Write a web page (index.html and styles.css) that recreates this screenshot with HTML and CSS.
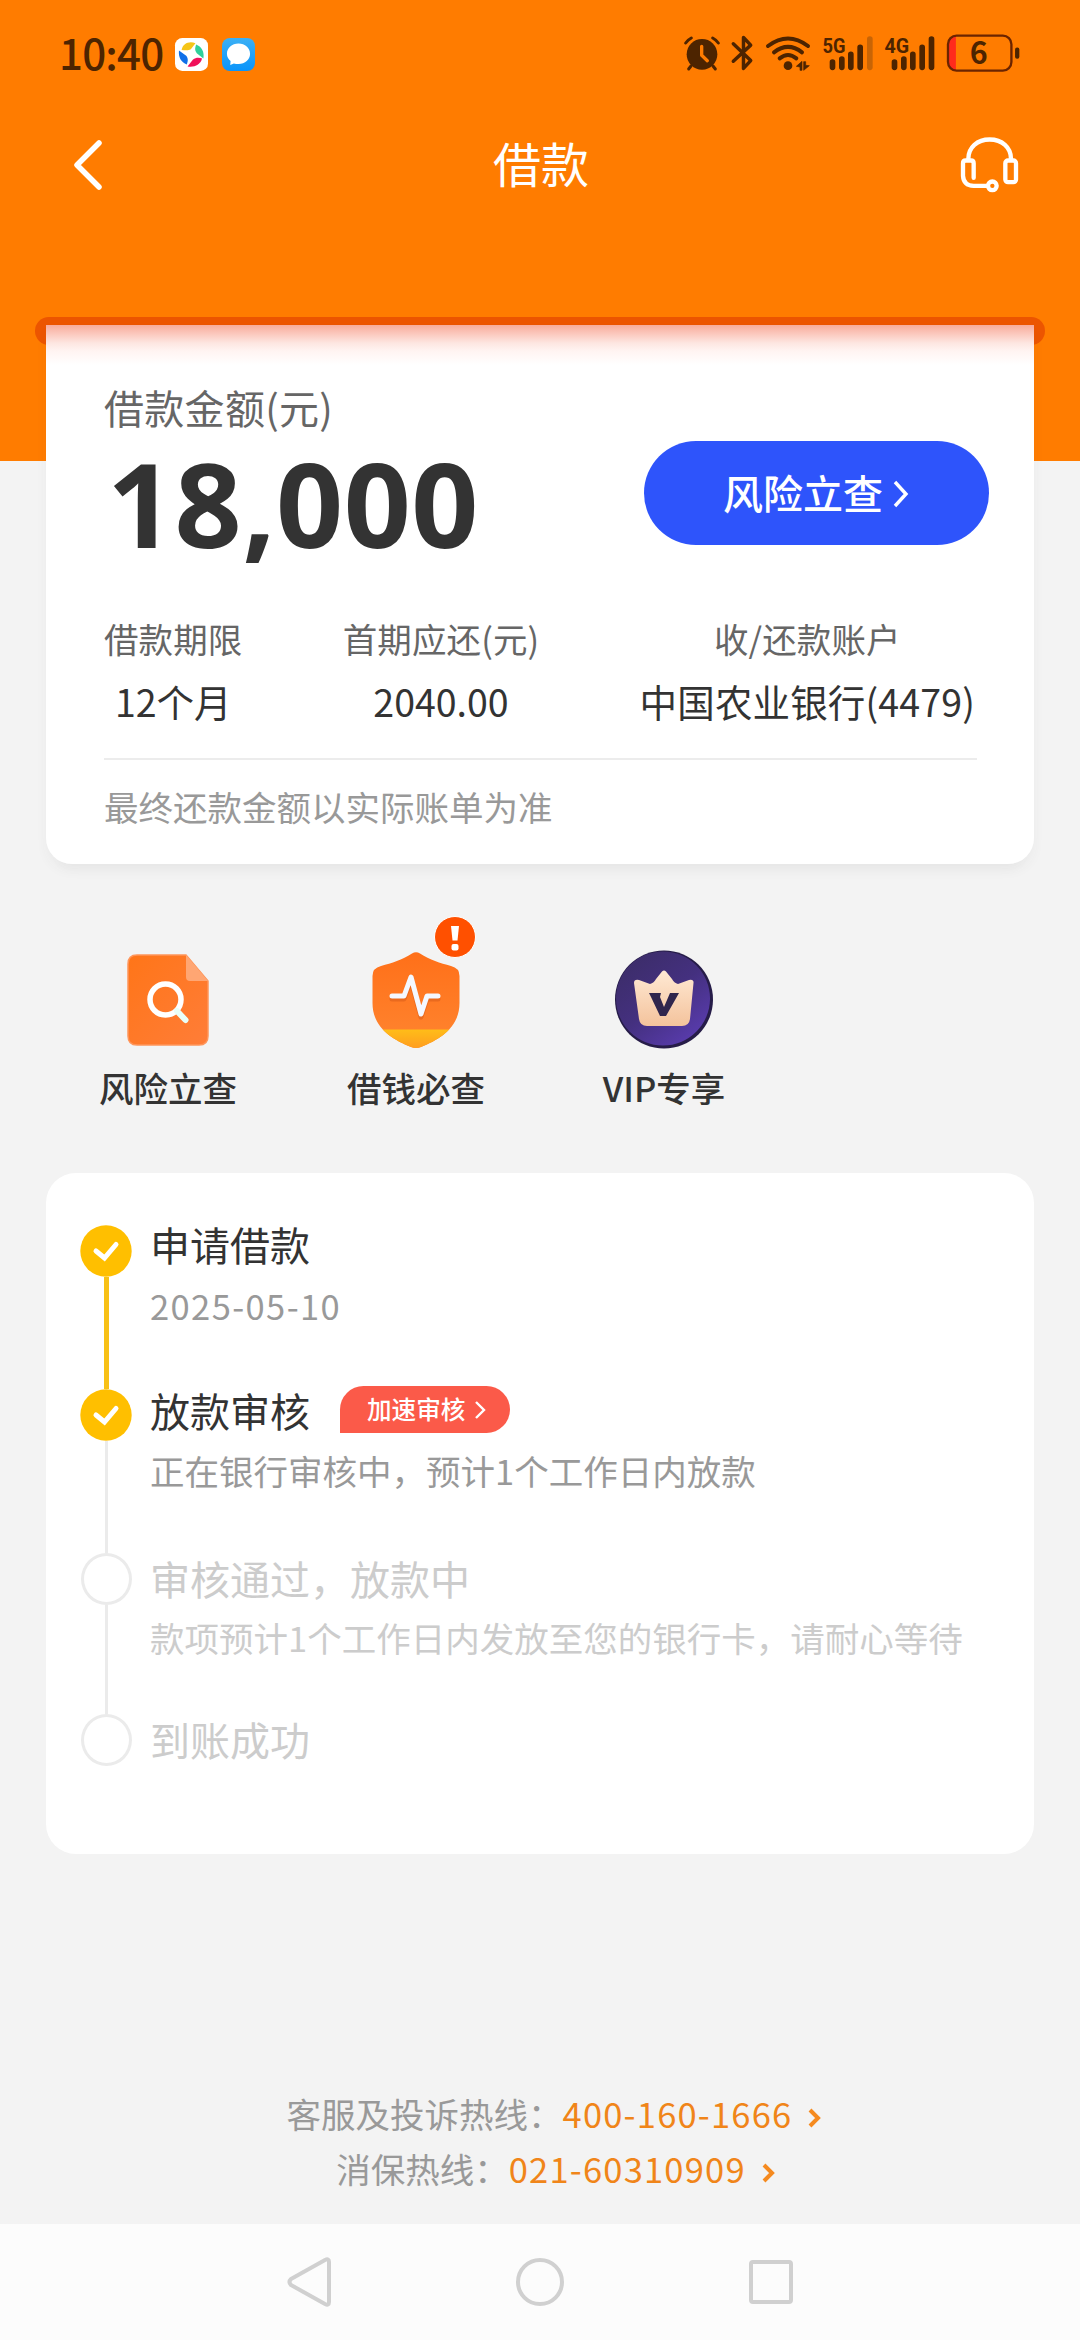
FILE: index.html
```html
<!DOCTYPE html>
<html lang="zh-CN">
<head>
<meta charset="UTF-8">
<title>借款</title>
<link rel="stylesheet" href="styles.css">
</head>
<body>
<div class="page">
  <header class="hero">
    <div class="status">
      <div class="status-left">
        <span class="clock">10:40</span>
        <svg class="app-icon" viewBox="0 0 100 100"><rect width="100" height="100" rx="22" fill="#fff"/>
          <path d="M20 36C24 16 44 8 62 16L48 34C38 40 28 36 20 36Z" fill="#f5c518"/>
          <path d="M64 20C80 26 90 42 86 62L66 46C58 36 62 28 64 20Z" fill="#2fd09a"/>
          <path d="M82 62C78 80 58 90 38 86L54 66C64 58 74 60 82 62Z" fill="#f0105a"/>
          <path d="M36 80C18 74 10 58 12 38L34 54C42 64 38 74 36 80Z" fill="#0f6fe8"/></svg>
        <svg class="app-icon app-msg" viewBox="0 0 100 100"><defs><linearGradient id="msg" x1="0" y1="0" x2="0" y2="1"><stop offset="0" stop-color="#3bb0f5"/><stop offset="1" stop-color="#0a94fa"/></linearGradient></defs><rect width="100" height="100" rx="24" fill="url(#msg)"/><path d="M50 17c20 0 35 13 35 31S70 79 50 79c-5 0-10-1-14-2l-11 5 1-12C19 65 15 57 15 48c0-18 15-31 35-31Z" fill="#fff"/></svg>
      </div>
      <div class="status-right">
        <svg class="ic-alarm" viewBox="69 48 108 105"><circle cx="123" cy="103" r="46" fill="#4d2400"/><g stroke="#4d2400" stroke-width="9" stroke-linecap="round" fill="none"><path d="M74 69Q81 59 91 54M155 54Q165 59 172 69"/><path d="M90 138L83 147M156 138L163 147"/></g><path d="M122 79V106L139 122" stroke="#ff7c00" stroke-width="10" stroke-linecap="round" stroke-linejoin="round" fill="none"/></svg>
        <svg class="ic-bt" viewBox="210 46 70 108"><path d="M217 72L270 123L248 147V53L270 76L217 125" fill="none" stroke="#4d2400" stroke-width="10.500" stroke-linejoin="round" stroke-linecap="round"/></svg>
        <svg class="ic-wifi" viewBox="312 46 138 108"><g fill="none" stroke="#4d2400" stroke-width="12" stroke-linecap="round"><path d="M321 79Q381 34 441 79"/><path d="M339 98Q381 65 423 98"/><path d="M356 116Q381 96 406 116"/></g><circle cx="381" cy="138" r="13" fill="#4d2400"/><path d="M406 140L423 125V152H417V142ZM445 138L428 152V126H434V137Z" fill="#4d2400" stroke="#4d2400" stroke-width="2"/></svg>
        <svg class="ic-sig" viewBox="482 46 152 108"><text x="483" y="99" font-size="63" textLength="69" lengthAdjust="spacingAndGlyphs" class="net">5G</text><g stroke="#4d2400" stroke-width="17" stroke-linecap="round"><path d="M513 127V143M541 118V143M568 104V143M596 83V143"/><path d="M625 58V143" stroke="#c86405"/></g></svg>
        <svg class="ic-sig sig2" viewBox="668 46 152 108"><text x="669" y="99" font-size="63" textLength="74" lengthAdjust="spacingAndGlyphs" class="net">4G</text><g stroke="#4d2400" stroke-width="17" stroke-linecap="round"><path d="M699 127V143M727 118V143M754 104V143M782 83V143M810 58V143"/></g></svg>
        <svg class="ic-bat" viewBox="853 42 222 115"><path d="M882 49V152Q859 150 859 124V75Q859 51 882 49Z" fill="#ff2b1c"/><rect x="858" y="47" width="192" height="106" rx="26" fill="none" stroke="#6b2400" stroke-width="7"/><rect x="1061" y="83" width="13" height="34" rx="6" fill="#4d2400"/><text x="951" y="134" font-size="92" text-anchor="middle" class="bat">6</text></svg>
      </div>
    </div>
    <nav class="topbar">
      <svg class="back" viewBox="0 0 30 52"><path d="M26 4L4 26L26 48" fill="none" stroke="#fff" stroke-width="5.5" stroke-linecap="round" stroke-linejoin="round"/></svg>
      <h1 class="title">借款</h1>
      <svg class="headset" viewBox="896 348 177 170"><g fill="none" stroke="#fff" stroke-width="13" stroke-linejoin="round" stroke-linecap="round"><path d="M921 416C921 381 948 358 985 358S1049 381 1049 416"/><rect x="1032" y="421" width="32" height="65" rx="8"/><path d="M937 473V429Q937 421 929 421H913Q905 421 905 429V467Q907 496 937 497H976"/><circle cx="993" cy="497" r="13"/></g></svg>
    </nav>
  </header>

  <div class="slot"></div>
  <section class="card loan">
    <div class="loan-head">
      <div>
        <p class="label-lg">借款金额(元)</p>
        <p class="amount">18,000</p>
      </div>
      <a class="cta">风险立查<svg class="cta-arrow" viewBox="0 0 17 28"><path d="M3 2L14 14L3 26" fill="none" stroke="#fff" stroke-width="3.4"/></svg></a>
    </div>
    <div class="facts">
      <div class="fact"><p class="fact-k">借款期限</p><p class="fact-v">12个月</p></div>
      <div class="fact"><p class="fact-k">首期应还(元)</p><p class="fact-v">2040.00</p></div>
      <div class="fact fact-bank"><p class="fact-k">收/还款账户</p><p class="fact-v">中国农业银行(4479)</p></div>
    </div>
    <p class="note">最终还款金额以实际账单为准</p>
  </section>

  <section class="tools">
    <div class="tool">
      <svg class="tool-icon" viewBox="0 0 100 100"><defs><linearGradient id="doc" x1="0" y1="0" x2="1" y2="1"><stop offset="0" stop-color="#ff7518"/><stop offset="1" stop-color="#ff7d38"/></linearGradient></defs>
        <path d="M19 6H68L90 32V87Q90 96 81 96H19Q10 96 10 87V15Q10 6 19 6Z" fill="url(#doc)" stroke="#ff955a" stroke-width="1.5"/><path d="M68 6L90 32H72Q68 32 68 28Z" fill="#ffa673"/>
        <circle cx="47.500" cy="50.500" r="15.500" fill="none" stroke="#fff" stroke-width="5.500"/><path d="M59 62L67.500 71" stroke="#e9fff8" stroke-width="6" stroke-linecap="round"/></svg>
      <span>风险立查</span>
    </div>
    <div class="tool">
      <svg class="tool-icon" viewBox="0 0 100 100"><defs><linearGradient id="shd" x1="0" y1="0" x2="0" y2="1"><stop offset="0" stop-color="#ff6f18"/><stop offset="1" stop-color="#ff8530"/></linearGradient><linearGradient id="yel" x1="0" y1="0" x2="0" y2="1"><stop offset="0" stop-color="#ffbd18"/><stop offset="1" stop-color="#ff9b20"/></linearGradient><clipPath id="sc"><path d="M46 4.500Q50 2 54 4.500C64 11 74 14 85 17Q93.500 19 93.500 27V54C93.500 78 75 90 55 98Q50 100 45 98C25 90 6.500 78 6.500 54V27Q6.500 19 15 17C26 14 36 11 46 4.500Z"/></clipPath></defs>
        <g clip-path="url(#sc)"><rect width="100" height="100" fill="url(#shd)"/><rect y="80.500" width="100" height="20" fill="url(#yel)"/></g>
        <path d="M26 48H38L45 29L55 66L61 48H72" transform="translate(0 2)" fill="none" stroke="#d65a18" stroke-opacity=".5" stroke-width="5" stroke-linecap="round" stroke-linejoin="round"/>
        <path d="M26 47H38L45 28L55 65L61 47H72" fill="none" stroke="#f4f8ff" stroke-width="5" stroke-linecap="round" stroke-linejoin="round"/></svg>
      <svg class="alert" viewBox="0 0 44 44"><circle cx="22" cy="22" r="20.500" fill="#ff5000" stroke="#fff" stroke-width="1"/><path d="M18 11H26L24.500 25.500H19.500Z" fill="#fff"/><rect x="18.500" y="29" width="7" height="6.500" rx="2" fill="#fff"/></svg>
      <span>借钱必查</span>
    </div>
    <div class="tool">
      <svg class="tool-icon" viewBox="0 0 100 100"><defs><linearGradient id="vip" x1="0" y1="0" x2=".8" y2="1"><stop offset="0" stop-color="#3a2c64"/><stop offset=".55" stop-color="#44307f"/><stop offset="1" stop-color="#5a3cb0"/></linearGradient><linearGradient id="crown" x1="0" y1="0" x2="0" y2="1"><stop offset="0" stop-color="#ffe9d4"/><stop offset="1" stop-color="#f4c39c"/></linearGradient></defs>
        <circle cx="50" cy="50.500" r="49" fill="#261c48"/><circle cx="49" cy="49.500" r="47" fill="url(#vip)"/>
        <path d="M20 34Q20 30 25 31L36 35Q40 34 42 30L48 22.500Q50 20.500 52 22.500L58 30Q60 34 64 35L75 31Q80 30 79.500 34L76 70Q75 77 68 77H33Q26 77 25 70Z" fill="url(#crown)"/>
        <path d="M35 44H47L46 48L50 58L56 44H65L52 67H46L37 48Z" fill="#30264d"/></svg>
      <span>VIP专享</span>
    </div>
  </section>

  <section class="card steps">
    <div class="step">
      <div class="rail"><svg class="dot" viewBox="0 0 52 52"><circle cx="26" cy="26" r="25.700" fill="#ffbf00"/><path d="M16 26L24.500 33L36 19.500" fill="none" stroke="#fff" stroke-width="5" stroke-linecap="round"/></svg><i class="line line-on"></i></div>
      <div class="body"><h2>申请借款</h2><p class="date">2025-05-10</p></div>
    </div>
    <div class="step">
      <div class="rail"><svg class="dot" viewBox="0 0 52 52"><circle cx="26" cy="26" r="25.700" fill="#ffbf00"/><path d="M16 26L24.500 33L36 19.500" fill="none" stroke="#fff" stroke-width="5" stroke-linecap="round"/></svg><i class="line"></i></div>
      <div class="body"><div class="step-title"><h2>放款审核</h2><span class="tag">加速审核<svg class="tag-arrow" viewBox="0 0 12 20"><path d="M2 2L10 10L2 18" fill="none" stroke="#fff" stroke-width="2.400"/></svg></span></div><p>正在银行审核中，预计1个工作日内放款</p></div>
    </div>
    <div class="step todo">
      <div class="rail"><i class="dot ring"></i><i class="line"></i></div>
      <div class="body"><h2>审核通过，放款中</h2><p>款项预计1个工作日内发放至您的银行卡，请耐心等待</p></div>
    </div>
    <div class="step todo">
      <div class="rail"><i class="dot ring"></i></div>
      <div class="body"><h2>到账成功</h2></div>
    </div>
  </section>

  <footer class="contact">
    <p>客服及投诉热线：<a>400-160-1666</a><svg class="link-arrow" viewBox="0 0 14 20"><path d="M3 2L11 10L3 18" fill="none" stroke="#f58a1f" stroke-width="4"/></svg></p>
    <p class="second">消保热线：<a>021-60310909</a><svg class="link-arrow" viewBox="0 0 14 20"><path d="M3 2L11 10L3 18" fill="none" stroke="#f58a1f" stroke-width="4"/></svg></p>
  </footer>

  <div class="navbar">
    <svg viewBox="0 0 52 52"><path d="M42 4Q46 2 46 6V46Q46 50 42 48L8 29Q5 26 8 23Z" fill="none" stroke="#d0d0d0" stroke-width="4" stroke-linejoin="round"/></svg>
    <svg viewBox="0 0 52 52"><circle cx="26" cy="26" r="22" fill="none" stroke="#d0d0d0" stroke-width="4"/></svg>
    <svg viewBox="0 0 52 52"><rect x="6" y="6" width="40" height="40" rx="2" fill="none" stroke="#d0d0d0" stroke-width="4"/></svg>
  </div>
</div>
</body>
</html>
```

FILE: styles.css
```css
* { box-sizing: border-box; margin: 0; padding: 0; }
body { background: #f3f3f3; font-family: "Noto Sans CJK SC", "Noto Sans", sans-serif; color: #333; }
svg { display: block; flex: none; overflow: visible; }
i { display: block; }
.page { width: 1080px; height: 2340px; display: flex; flex-direction: column; overflow: hidden; }

.hero { height: 461px; background: #ff7c00; flex: none; }
.status { height: 108px; padding: 0 60px 0 59px; display: flex; align-items: center; justify-content: space-between; }
.status-left, .status-right { display: flex; align-items: center; }
.clock { font-size: 42px; line-height: 50px; width: 116px; color: #4d2400; font-weight: 500; white-space: nowrap; letter-spacing: -.8px; padding-bottom: 4px; }
.app-icon { width: 33px; height: 33px; }
.app-msg { margin-left: 14px; }
.ic-alarm { width: 36px; height: 35px; }
.ic-bt { width: 23px; height: 36px; margin-left: 11px; }
.ic-wifi { width: 46px; height: 36px; margin-left: 11px; }
.ic-sig { width: 51px; height: 36px; margin-left: 11px; }
.ic-bat { width: 74px; height: 38px; margin-left: 11px; }
.status-right > svg { position: static; margin-bottom: 2px; }
.net { font-family: Roboto, sans-serif; font-weight: 700; fill: #4d2400; }
.bat { font-family: "Noto Sans CJK SC", sans-serif; font-weight: 700; fill: #4d2400; }

.topbar { height: 113px; padding: 0 61px 0 73px; display: flex; align-items: center; justify-content: space-between; }
.back { width: 30px; height: 52px; }
.title { font-size: 48px; line-height: 60px; font-weight: 400; color: #fff; padding: 0 0 6px 19px; }
.headset { width: 59px; height: 57px; }

.slot { flex: none; height: 28px; margin: -144px 35px 0; border-radius: 14px; background: #ec5500; }
.card { background: #fff; margin: 0 46px; flex: none; position: relative; }
.loan { margin-top: -20px; height: 539px; padding: 57px 58px 0; border-radius: 0 0 26px 26px;
  background: linear-gradient(180deg, #f8ab9b 0, #fbc9be 9px, #fde6e1 18px, #fff4f2 26px, #fff 40px);
  box-shadow: 0 7px 12px rgba(60, 60, 60, .045), 0 16px 10px -10px rgba(0,0,0,.02); }
.loan-head { display: flex; justify-content: space-between; height: 226px; }
.label-lg { font-size: 40px; line-height: 50px; color: #666; white-space: nowrap; letter-spacing: .3px; }
.amount { font-family: "Noto Sans", sans-serif; font-weight: 700; font-size: 117.5px; line-height: 130px; letter-spacing: .4px; margin: 5px 0 0 3px; color: #333; }
.cta { width: 345px; height: 104px; margin: 59px -13px 0 0; border-radius: 52px; background: #2e54fb; color: #fff; font-size: 40px; font-weight: 500; line-height: 100px; padding: 0 0 3px 79px; display: flex; align-items: center; white-space: nowrap; }
.cta-arrow { width: 17px; height: 28px; margin: 4px 0 0 9px; }
.facts { display: flex; justify-content: space-between; height: 152px; padding-top: 6px; border-bottom: 2px solid #ececec; text-align: center; white-space: nowrap; margin-right: -1px; }
.fact-k { font-size: 34.5px; line-height: 48px; color: #666; letter-spacing: .1px; }
.fact-v { font-size: 37.5px; line-height: 48px; margin-top: 15px; color: #333; }
.fact-bank { margin-right: 2px; }
.fact-bank .fact-v { letter-spacing: .15px; }
.note { font-size: 34.5px; line-height: 48px; color: #999; margin-top: 22px; }

.tools { flex: none; height: 309px; padding: 85px 44px 0; display: flex; }
.tool { width: 248px; position: relative; display: flex; flex-direction: column; align-items: center; font-size: 34.5px; line-height: 48px; font-weight: 500; }
.tool-icon { width: 100px; height: 100px; margin-bottom: 14px; }
.alert { position: absolute; left: 141px; top: -34px; width: 44px; height: 44px; }

.steps { height: 681px; padding: 52px 35px 0 34px; border-radius: 30px; }
.step { display: flex; height: 164px; }
.step:nth-child(3) { height: 161px; }
.rail { width: 52px; display: flex; flex-direction: column; align-items: center; flex: none; }
.dot { width: 52px; height: 52px; flex: none; }
.ring { border: 3px solid #ebebeb; border-radius: 50%; width: 51px; height: 52px; }
.line { width: 3px; flex: 1; background: #ebebeb; }
.line-on { width: 5px; background: #f8c116; }
.body { padding-left: 18px; white-space: nowrap; margin-top: -6px; }
.step h2 { font-size: 40px; line-height: 50px; font-weight: 400; color: #333; }
.step p { font-size: 34.5px; line-height: 48px; color: #999; margin-top: 12px; }
.step .date { letter-spacing: 1.4px; }
.step:nth-child(n+2) .body { margin-top: -4px; }
.step:nth-child(n+2) p { margin-top: 11px; }
.step.todo .body { margin-top: 0; }
.step.todo p { margin-top: 10px; }
.step.todo h2, .step.todo p { color: #ccc; }
.step-title { display: flex; }
.tag { width: 170px; height: 47px; margin: 1px 0 0 30px; padding: 0 0 2px 27px; background: #fb5a49; color: #fff; border-radius: 24px 24px 24px 0; font-size: 24.6px; line-height: 45px; font-weight: 500; display: flex; align-items: center; }
.tag-arrow { width: 12px; height: 20px; margin: 2px 0 0 9px; }

.contact { flex: 1; padding-top: 232px; font-size: 34.5px; line-height: 55px; color: #999; white-space: nowrap; }
.contact p { display: flex; justify-content: center; align-items: center; padding-left: 28px; }
.contact .second { padding-left: 31px; }
.contact a { color: #f08519; letter-spacing: 1.2px; }
.link-arrow { width: 14px; height: 20px; margin: 9px 0 0 15px; }

.navbar { flex: none; height: 116px; background: #fcfcfc; padding: 0 283px; display: flex; justify-content: space-between; align-items: center; }
.navbar svg { width: 52px; height: 52px; }
```
